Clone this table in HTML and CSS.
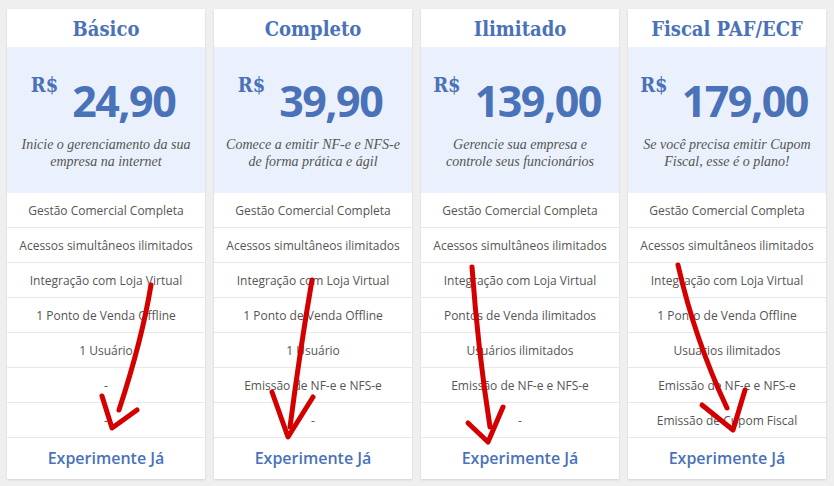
FILE: index.html
```html
<!DOCTYPE html>
<html lang="pt-BR">
<head>
<meta charset="utf-8">
<title>Planos</title>
<link rel="stylesheet" href="styles.css">
</head>
<body>
<div class="plans">
  <div class="card">
    <h2 class="title">Básico</h2>
    <div class="panel">
      <div class="price"><span class="cur">R$</span><span class="val">24,90</span></div>
      <p class="desc">Inicie o gerenciamento da sua empresa na internet</p>
    </div>
    <ul class="features">
      <li>Gestão Comercial Completa</li>
      <li>Acessos simultâneos ilimitados</li>
      <li>Integração com Loja Virtual</li>
      <li>1 Ponto de Venda Offline</li>
      <li>1 Usuário</li>
      <li>-</li>
      <li>-</li>
    </ul>
    <a class="cta" href="#">Experimente Já</a>
  </div>
  <div class="card">
    <h2 class="title">Completo</h2>
    <div class="panel">
      <div class="price"><span class="cur">R$</span><span class="val">39,90</span></div>
      <p class="desc">Comece a emitir NF-e e NFS-e de forma prática e ágil</p>
    </div>
    <ul class="features">
      <li>Gestão Comercial Completa</li>
      <li>Acessos simultâneos ilimitados</li>
      <li>Integração com Loja Virtual</li>
      <li>1 Ponto de Venda Offline</li>
      <li>1 Usuário</li>
      <li>Emissão de NF-e e NFS-e</li>
      <li>-</li>
    </ul>
    <a class="cta" href="#">Experimente Já</a>
  </div>
  <div class="card">
    <h2 class="title">Ilimitado</h2>
    <div class="panel">
      <div class="price"><span class="cur">R$</span><span class="val">139,00</span></div>
      <p class="desc">Gerencie sua empresa e controle seus funcionários</p>
    </div>
    <ul class="features">
      <li>Gestão Comercial Completa</li>
      <li>Acessos simultâneos ilimitados</li>
      <li>Integração com Loja Virtual</li>
      <li>Pontos de Venda ilimitados</li>
      <li>Usuários ilimitados</li>
      <li>Emissão de NF-e e NFS-e</li>
      <li>-</li>
    </ul>
    <a class="cta" href="#">Experimente Já</a>
  </div>
  <div class="card">
    <h2 class="title">Fiscal PAF/ECF</h2>
    <div class="panel">
      <div class="price"><span class="cur">R$</span><span class="val">179,00</span></div>
      <p class="desc">Se você precisa emitir Cupom Fiscal, esse é o plano!</p>
    </div>
    <ul class="features">
      <li>Gestão Comercial Completa</li>
      <li>Acessos simultâneos ilimitados</li>
      <li>Integração com Loja Virtual</li>
      <li>1 Ponto de Venda Offline</li>
      <li>Usuarios ilimitados</li>
      <li>Emissão de NF-e e NFS-e</li>
      <li>Emissão de Cupom Fiscal</li>
    </ul>
    <a class="cta" href="#">Experimente Já</a>
  </div>
</div>
<svg class="arrows" width="834" height="486" viewBox="0 0 834 486" aria-hidden="true">
  <g fill="none" stroke="#d40000" stroke-width="5" stroke-linecap="round" stroke-linejoin="round">
    <path d="M151 285 Q142 340 119 410"/>
    <path d="M102 396 L112 428 L137 410"/>
    <path d="M312 280 Q300 350 290 427"/>
    <path d="M272 392 L288 437 L313 397"/>
    <path d="M472 267 Q478 350 490 427"/>
    <path d="M468 423 L488 442 L503 407"/>
    <path d="M678 265 Q695 340 727 408"/>
    <path d="M702 405 L733 430 L745 390"/>
  </g>
</svg>
</body>
</html>
```
FILE: styles.css
```css
* { box-sizing: border-box; }
html, body { margin: 0; padding: 0; }
body {
  background: #efefef;
  width: 834px;
  height: 486px;
  overflow: hidden;
  position: relative;
}
.plans {
  display: flex;
  gap: 9px;
  padding: 9px 0 0 7px;
}
.card {
  width: 198px;
  background: #fff;
  box-shadow: 0 1px 2px rgba(0,0,0,0.12);
  display: flex;
  flex-direction: column;
}
.title {
  margin: 0;
  height: 38px;
  line-height: 40px;
  text-align: center;
  font-family: "DejaVu Serif", serif;
  font-stretch: condensed;
  font-weight: bold;
  font-size: 20px;
  color: #4a72b8;
}
.panel {
  background: #eaf1fc;
  height: 146px;
  padding-top: 26px;
}
.price {
  display: flex;
  justify-content: center;
  align-items: flex-start;
  gap: 14px;
  padding-right: 6px;
  color: #4a72b8;
  font-weight: bold;
}
.cur {
  font-family: "DejaVu Serif", serif;
  font-stretch: condensed;
  font-size: 20px;
  line-height: 24px;
}
.val {
  font-family: "Open Sans", sans-serif;
  font-size: 43px;
  line-height: 44px;
  margin-top: 6px;
  letter-spacing: -1.5px;
}
.desc {
  margin: 13px 8px 0;
  text-align: center;
  font-family: "Liberation Serif", "DejaVu Serif", serif;
  font-style: italic;
  font-size: 14px;
  line-height: 17px;
  color: #555;
}
.features {
  list-style: none;
  margin: 0;
  padding: 0;
}
.features li {
  height: 35px;
  border-bottom: 1px solid #e8e8e8;
  display: flex;
  align-items: center;
  justify-content: center;
  font-family: "Open Sans", sans-serif;
  font-size: 12px;
  color: #555;
}
.cta {
  height: 41px;
  padding-bottom: 2px;
  display: flex;
  align-items: center;
  justify-content: center;
  font-family: "Open Sans", sans-serif;
  font-weight: 600;
  font-size: 16px;
  color: #4a72b8;
  text-decoration: none;
}
.arrows {
  position: absolute;
  left: 0;
  top: 0;
  pointer-events: none;
}
```
